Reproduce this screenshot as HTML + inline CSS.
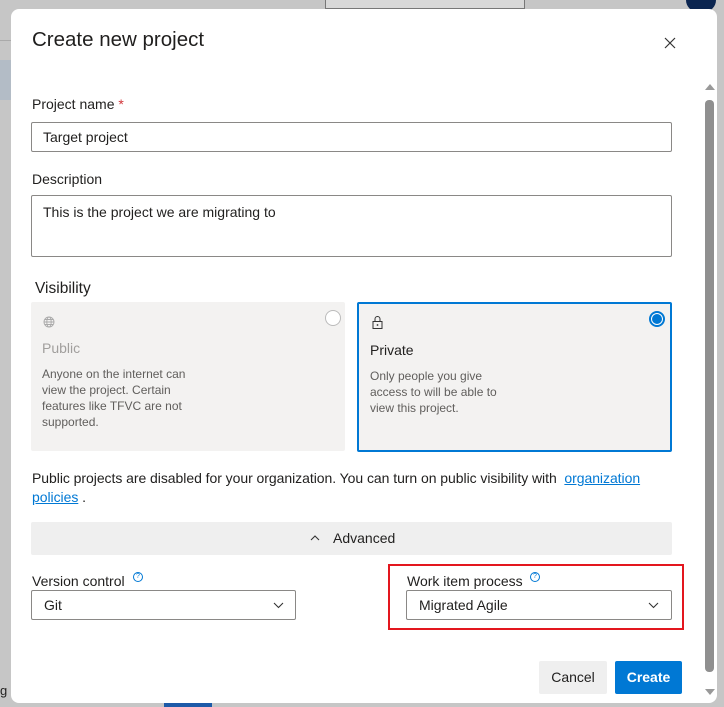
<!DOCTYPE html>
<html><head><style>
*{box-sizing:border-box;margin:0;padding:0}
body{width:724px;height:707px;background:#c6c6c6;position:relative;overflow:hidden;font-family:"Liberation Sans",sans-serif;color:#201f1e;font-size:14px}
.a{position:absolute}
.dlg{left:11px;top:9px;width:706px;height:694px;background:#fff;border-radius:8px}
.inp{border:1px solid #8a8886;border-radius:2px;background:#fff}
.lbl{font-size:14px;color:#201f1e}
</style></head><body>
<div class="a" style="left:0;top:40px;width:11px;height:1px;background:#aaa"></div>
<div class="a" style="left:0;top:60px;width:11px;height:40px;background:#b3bcc6"></div>
<div class="a" style="left:325px;top:0;width:200px;height:9px;border:1px solid #777;border-top:none;background:#d8d8d8"></div>
<div class="a" style="left:686px;top:0;width:30px;height:12px;background:#0b2550;border-radius:0 0 15px 15px"></div>
<div class="a" style="left:164px;top:703px;width:48px;height:4px;background:#1d5aa8"></div>
<div class="a" style="left:0;top:683px;font-size:13px">g</div>
<div class="a dlg"></div>
<div class="a" style="left:32px;top:28px;font-size:20.5px;color:#201f1e">Create new project</div>
<svg class="a" style="left:664px;top:37px" width="12" height="12"><path d="M1 1L11 11M11 1L1 11" stroke="#333" stroke-width="1.2"/></svg>
<div class="a" style="left:705px;top:84px;width:0;height:0;border-left:5px solid transparent;border-right:5px solid transparent;border-bottom:6px solid #999"></div>
<div class="a" style="left:705px;top:100px;width:9px;height:572px;background:#8f8f8f;border-radius:4px"></div>
<div class="a" style="left:705px;top:689px;width:0;height:0;border-left:5px solid transparent;border-right:5px solid transparent;border-top:6px solid #999"></div>

<div class="a lbl" style="left:32px;top:96px">Project name <span style="color:#d13438">*</span></div>
<div class="a inp" style="left:31px;top:122px;width:641px;height:30px"></div>
<div class="a" style="left:43px;top:129px">Target project</div>
<div class="a lbl" style="left:32px;top:171px">Description</div>
<div class="a inp" style="left:31px;top:195px;width:641px;height:62px"></div>
<div class="a" style="left:43px;top:204px">This is the project we are migrating to</div>

<div class="a" style="left:35px;top:280px;font-size:15.5px">Visibility</div>
<div class="a" style="left:31px;top:302px;width:314px;height:149px;background:#f3f2f1;border-radius:2px"></div>
<svg class="a" style="left:43px;top:316px" width="12" height="12" viewBox="0 0 12 12"><g fill="none" stroke="#aaa" stroke-width="0.9"><circle cx="6" cy="6" r="5"/><ellipse cx="6" cy="6" rx="2.2" ry="5"/><path d="M1 6h10M2 3.5h8M2 8.5h8"/></g></svg>
<div class="a" style="left:325px;top:310px;width:16px;height:16px;border:1px solid #bbb;border-radius:50%;background:#fff"></div>
<div class="a" style="left:42px;top:340px;font-size:14px;color:#a19f9d">Public</div>
<div class="a" style="left:42px;top:366px;font-size:12px;line-height:16px;color:#605e5c;width:160px">Anyone on the internet can view the project. Certain features like TFVC are not supported.</div>

<div class="a" style="left:357px;top:302px;width:315px;height:150px;background:#f3f2f1;border:2px solid #0078d4;border-radius:2px"></div>
<svg class="a" style="left:372px;top:316px" width="11" height="13" viewBox="0 0 11 13"><g fill="none" stroke="#333" stroke-width="1"><rect x="1" y="5.5" width="9" height="7"/><path d="M3 5.5V3a2.5 2.5 0 0 1 5 0v2.5"/></g><circle cx="5.5" cy="9" r="0.9" fill="#333"/></svg>
<div class="a" style="left:649px;top:311px;width:16px;height:16px;border:2px solid #0078d4;border-radius:50%;background:#fff"></div>
<div class="a" style="left:652px;top:314px;width:10px;height:10px;border-radius:50%;background:#0078d4"></div>
<div class="a" style="left:370px;top:342px;font-size:14px">Private</div>
<div class="a" style="left:370px;top:368px;font-size:12px;line-height:16px;color:#605e5c;width:140px">Only people you give access to will be able to view this project.</div>

<div class="a" style="left:32px;top:469px;width:650px;line-height:19px;font-size:14px;letter-spacing:-0.05px">Public projects are disabled for your organization. You can turn on public visibility with&nbsp; <span style="color:#0078d4;text-decoration:underline">organization</span><br><span style="color:#0078d4;text-decoration:underline">policies</span> .</div>

<div class="a" style="left:31px;top:522px;width:641px;height:33px;background:#efefef;border-radius:2px"></div>
<svg class="a" style="left:310px;top:534px" width="10" height="7"><path d="M1 6L5 2L9 6" fill="none" stroke="#333" stroke-width="1.1"/></svg>
<div class="a" style="left:333px;top:530px;font-size:14px">Advanced</div>

<div class="a lbl" style="left:32px;top:573px">Version control</div>
<div class="a" style="left:133px;top:572px;width:10px;height:10px;border:1px solid #0078d4;border-radius:50%;font-size:7px;color:#0078d4;text-align:center;line-height:8px">?</div>
<div class="a inp" style="left:31px;top:590px;width:265px;height:30px"></div>
<div class="a" style="left:44px;top:597px">Git</div>
<svg class="a" style="left:273px;top:602px" width="11" height="7"><path d="M1 1L5.5 5.5L10 1" fill="none" stroke="#333" stroke-width="1.1"/></svg>

<div class="a" style="left:388px;top:564px;width:296px;height:66px;border:2px solid #e3161e"></div>
<div class="a lbl" style="left:407px;top:573px">Work item process</div>
<div class="a" style="left:530px;top:572px;width:10px;height:10px;border:1px solid #0078d4;border-radius:50%;font-size:7px;color:#0078d4;text-align:center;line-height:8px">?</div>
<div class="a inp" style="left:406px;top:590px;width:266px;height:30px"></div>
<div class="a" style="left:419px;top:597px">Migrated Agile</div>
<svg class="a" style="left:648px;top:602px" width="11" height="7"><path d="M1 1L5.5 5.5L10 1" fill="none" stroke="#333" stroke-width="1.1"/></svg>

<div class="a" style="left:539px;top:661px;width:68px;height:33px;background:#efefef;border-radius:2px;text-align:center;line-height:33px;font-size:14px">Cancel</div>
<div class="a" style="left:615px;top:661px;width:67px;height:33px;background:#0078d4;border-radius:2px;text-align:center;line-height:33px;font-size:14px;color:#fff;font-weight:bold">Create</div>
</body></html>
